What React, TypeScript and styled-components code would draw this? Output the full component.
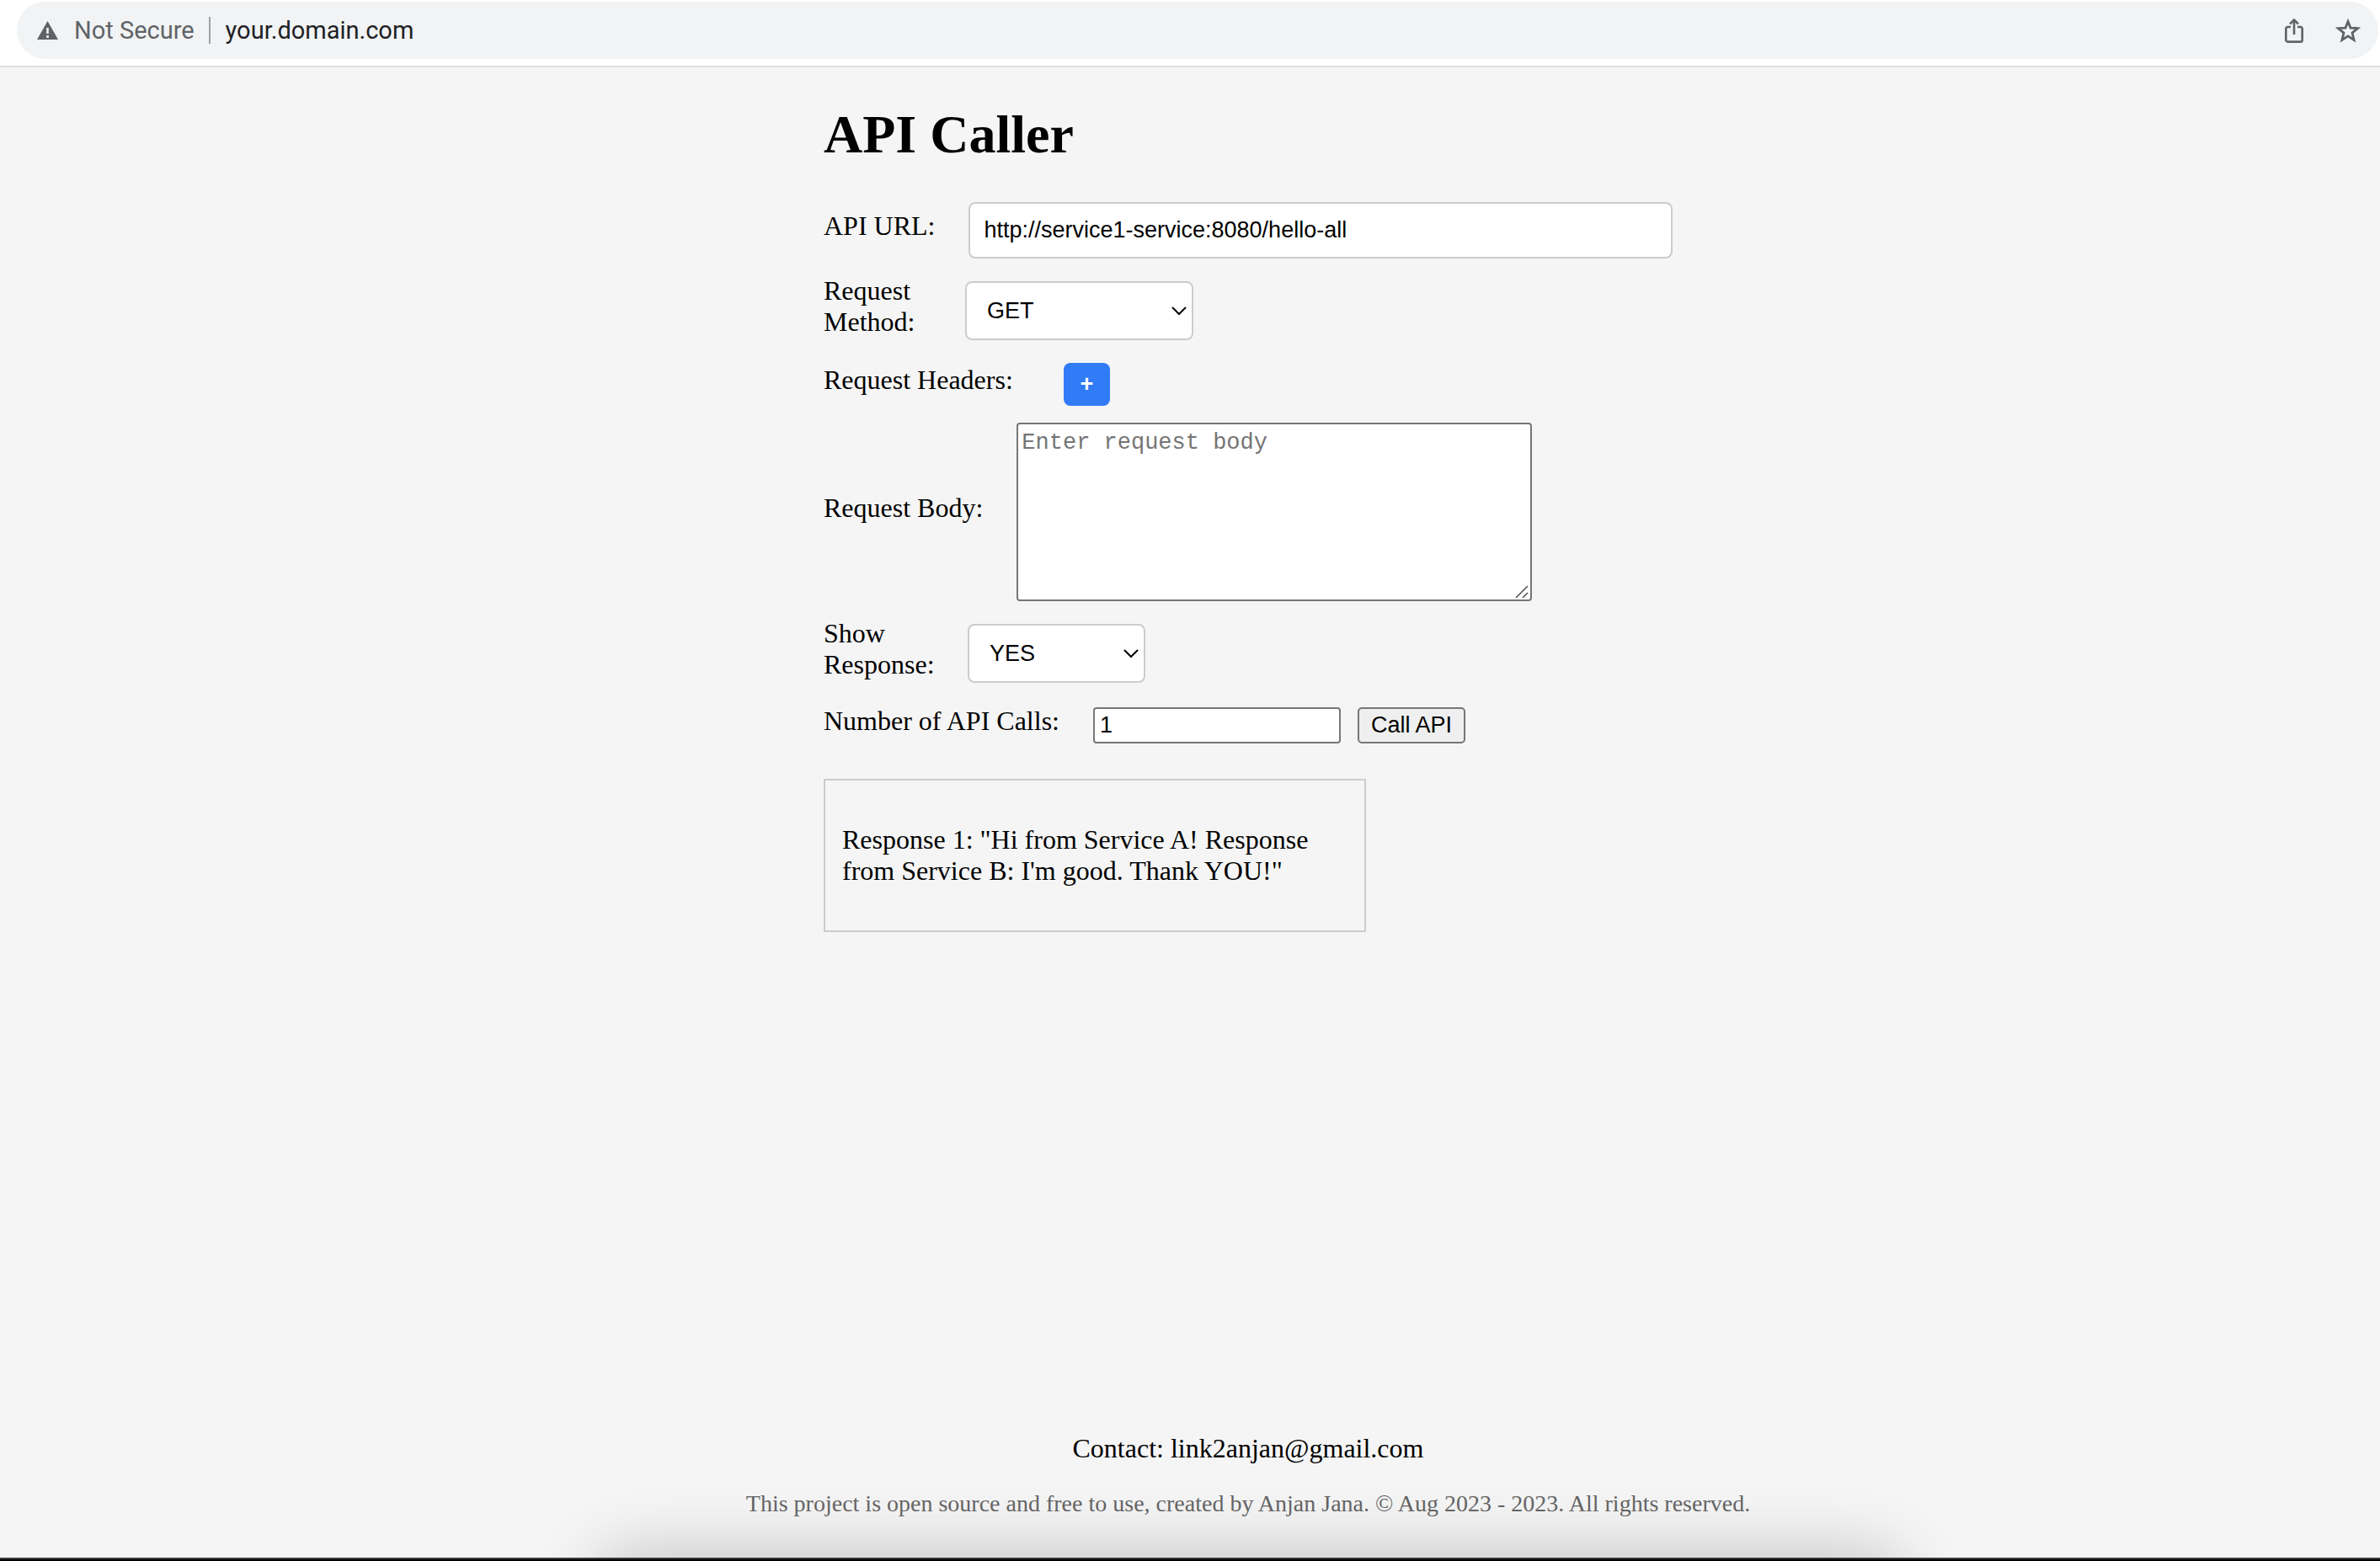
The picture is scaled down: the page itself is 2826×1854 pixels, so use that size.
import React, { useState } from "react";
import styled, { createGlobalStyle } from "styled-components";

const serif = `"Liberation Serif", "Times New Roman", Times, serif`;
const sans = `"Liberation Sans", Arial, Helvetica, sans-serif`;
const mono = `"Liberation Mono", "Courier New", monospace`;

const GlobalStyle = createGlobalStyle`
  *, *::before, *::after { box-sizing: border-box; }
  body {
    margin: 0;
    background: #f5f5f5;
    color: #000;
    font: 32px/37px ${serif};
  }
`;

const Screen = styled.div`
  min-height: 100vh;
  display: flex;
  flex-direction: column;
`;

/* Browser bar */

const BrowserBar = styled.header`
  padding: 2px 2px 8px 20px;
  background: #fff;
  border-bottom: 2px solid #dcdcdc;
`;

const AddressPill = styled.div`
  height: 68px;
  padding: 0 20px 0 24px;
  display: flex;
  align-items: center;
  background: #f1f3f4;
  border-radius: 34px;
  font: 29px/34px Roboto, sans-serif;
`;

const SecurityButton = styled.button`
  display: flex;
  align-items: center;
  gap: 19px;
  padding: 0;
  border: 0;
  background: none;
  color: #5f6368;
  font: inherit;
`;

const Divider = styled.span`
  width: 2px;
  height: 32px;
  margin: 0 18px 0 17px;
  background: #9fa1a4;
`;

const AddressInput = styled.input`
  flex: 1;
  min-width: 0;
  padding: 0;
  border: 0;
  background: none;
  color: #202124;
  font: inherit;
`;

const BarActions = styled.div`
  display: flex;
  align-items: center;
  gap: 32px;
`;

const IconButton = styled.button`
  display: flex;
  padding: 0;
  border: 0;
  background: none;
  color: #5f6368;
`;

/* Page */

const Page = styled.div`
  flex: 1;
  display: flex;
  flex-direction: column;
  align-items: center;
  padding: 43px 0 48px 138px;
`;

const Main = styled.main`
  width: 100%;
  max-width: 1008px;
  flex: 1;
`;

const Title = styled.h1`
  margin: 0 0 43px;
  font-size: 64px;
  line-height: 74px;
`;

const Form = styled.form`
  display: flex;
  flex-direction: column;
  gap: 20px;
`;

const Row = styled.div`
  display: flex;
  align-items: center;
`;

const Label = styled.label<{ $width?: number; $gap?: number }>`
  flex: none;
  width: ${(p) => (p.$width ? `${p.$width}px` : "auto")};
  margin-right: ${(p) => p.$gap ?? 40}px;
  margin-bottom: 10px;
`;

const UrlInput = styled.input`
  flex: 1;
  min-width: 0;
  height: 67px;
  padding: 0 16px;
  background: #fff;
  border: 2px solid #ccc;
  border-radius: 8px;
  color: #000;
  font: 27px/31px ${sans};
`;

const Stack = styled.div`
  display: grid;

  > * {
    grid-area: 1 / 1;
  }
`;

const Select = styled.select<{ $width: number }>`
  appearance: none;
  width: ${(p) => p.$width}px;
  height: 70px;
  padding: 0 24px;
  background: #fff;
  border: 2px solid #ccc;
  border-radius: 8px;
  color: #000;
  font: 27px/31px ${sans};
`;

const Chevron = styled.svg`
  place-self: center end;
  margin-right: 7px;
  pointer-events: none;
`;

const AddButton = styled.button`
  width: 55px;
  height: 51px;
  padding: 0;
  background: #317bf7;
  border: 0;
  border-radius: 8px;
  color: #fff;
  font: bold 27px/31px ${sans};
`;

const BodyInput = styled.textarea`
  width: 612px;
  height: 212px;
  padding: 7px 4px;
  resize: none;
  background: #fff;
  border: 2px solid #767676;
  border-radius: 4px;
  font: 27px/31px ${mono};

  &::placeholder {
    color: #757575;
  }
`;

const Grip = styled.svg`
  place-self: end;
  margin: 0 3px 3px 0;
  pointer-events: none;
`;

const CountInput = styled.input`
  width: 294px;
  height: 43px;
  padding: 2px 6px;
  background: #fff;
  border: 2px solid #767676;
  border-radius: 4px;
  color: #000;
  font: 27px/31px ${sans};
`;

const CallButton = styled.button`
  height: 43px;
  margin-left: 20px;
  padding: 0 14px;
  background: #efefef;
  border: 2px solid #767676;
  border-radius: 5px;
  color: #000;
  font: 27px/31px ${sans};
`;

const ResponseBox = styled.section`
  max-width: 644px;
  margin-top: 40px;
  padding: 52px 20px;
  border: 2px solid #ccc;
`;

const Paragraph = styled.p`
  margin: 0;
`;

const Footer = styled.footer`
  display: flex;
  flex-direction: column;
  align-items: center;
  gap: 31px;
`;

const MailLink = styled.a`
  color: inherit;
  text-decoration: none;
`;

const Copyright = styled.p`
  margin: 0;
  color: #666;
  font-size: 28px;
  line-height: 32px;
`;

/* Window edge, with the soft shadow that the dock casts on the page */

const WindowEdge = styled.div`
  position: relative;
  height: 4px;
  background: #000;
  border-top: 2px solid #3c3c3c;
`;

const DockShadow = styled.div`
  position: absolute;
  right: 0;
  bottom: 100%;
  left: 0;
  height: 120px;
  overflow: hidden;
  pointer-events: none;

  &::before {
    content: "";
    position: absolute;
    top: 100%;
    left: 25%;
    right: 20%;
    height: 120px;
    border-radius: 40px;
    box-shadow: 0 -8px 80px rgba(0, 0, 0, 0.2);
  }
`;

export default function App() {
  const [address, setAddress] = useState("your.domain.com");
  const [url, setUrl] = useState("http://service1-service:8080/hello-all");
  const [method, setMethod] = useState("GET");
  const [body, setBody] = useState("");
  const [show, setShow] = useState("YES");
  const [count, setCount] = useState("1");

  const chevron = (
    <Chevron width="20" height="14" viewBox="0 0 20 14" aria-hidden="true">
      <path d="M2.5 3.5l7.5 7.5 7.5-7.5" fill="none" stroke="#000" strokeWidth="2" strokeLinecap="round" />
    </Chevron>
  );

  return (
    <Screen>
      <GlobalStyle />
      <BrowserBar>
        <AddressPill>
          <SecurityButton type="button">
            <svg width="25" height="22" viewBox="0 0 25 22" aria-hidden="true">
              <path fill="currentColor" fillRule="evenodd" d="M12.5 0L25 22H0zM11.2 8v7h2.6V8zm0 9v3h2.6v-3z" />
            </svg>
            Not Secure
          </SecurityButton>
          <Divider />
          <AddressInput aria-label="Address" value={address} onChange={(e) => setAddress(e.target.value)} />
          <BarActions>
            <IconButton type="button" aria-label="Share">
              <svg width="32" height="32" viewBox="0 0 32 32" fill="none" stroke="currentColor" strokeWidth="2.6" aria-hidden="true">
                <path d="M12 12H8.500a2.200 2.200 0 0 0-2.200 2.200v13.200A2.200 2.200 0 0 0 8.500 29.600h15a2.200 2.200 0 0 0 2.200-2.200V14.200a2.200 2.200 0 0 0-2.200-2.200H20" />
                <path d="M16 21V4M11 8.500l5-5 5 5" />
              </svg>
            </IconButton>
            <IconButton type="button" aria-label="Bookmark">
              <svg width="32" height="32" viewBox="0 0 32 32" fill="none" stroke="currentColor" strokeWidth="2.8" aria-hidden="true">
                <path d="M16 5.500l3 7.600 8.600.5-6.600 5.500 2.100 8.300L16 22.900l-7.100 4.500L11 19.100l-6.600-5.500 8.600-.5z" />
              </svg>
            </IconButton>
          </BarActions>
        </AddressPill>
      </BrowserBar>

      <Page>
        <Main>
          <Title>API Caller</Title>
          <Form onSubmit={(e) => e.preventDefault()}>
            <Row>
              <Label htmlFor="url">API URL:</Label>
              <UrlInput id="url" value={url} onChange={(e) => setUrl(e.target.value)} />
            </Row>
            <Row>
              <Label htmlFor="method" $width={128}>Request Method:</Label>
              <Stack>
                <Select id="method" $width={271} value={method} onChange={(e) => setMethod(e.target.value)}>
                  <option>GET</option>
                  <option>POST</option>
                  <option>PUT</option>
                  <option>DELETE</option>
                </Select>
                {chevron}
              </Stack>
            </Row>
            <Row>
              <Label htmlFor="add-header" $gap={60}>Request Headers:</Label>
              <AddButton id="add-header" type="button">+</AddButton>
            </Row>
            <Row>
              <Label htmlFor="body">Request Body:</Label>
              <Stack>
                <BodyInput
                  id="body"
                  placeholder="Enter request body"
                  value={body}
                  onChange={(e) => setBody(e.target.value)}
                />
                <Grip width="17" height="16" viewBox="0 0 17 16" stroke="#555" strokeWidth="1.6" aria-hidden="true">
                  <path d="M1 15L15 1M9 15l6-6" />
                </Grip>
              </Stack>
            </Row>
            <Row>
              <Label htmlFor="show" $width={131}>Show Response:</Label>
              <Stack>
                <Select id="show" $width={211} value={show} onChange={(e) => setShow(e.target.value)}>
                  <option>YES</option>
                  <option>NO</option>
                </Select>
                {chevron}
              </Stack>
            </Row>
            <Row>
              <Label htmlFor="count">Number of API Calls:</Label>
              <CountInput id="count" type="number" min="1" value={count} onChange={(e) => setCount(e.target.value)} />
              <CallButton type="submit">Call API</CallButton>
            </Row>
          </Form>
          <ResponseBox>
            <Paragraph>Response 1: "Hi from Service A! Response from Service B: I'm good. Thank YOU!"</Paragraph>
          </ResponseBox>
        </Main>
        <Footer>
          <Paragraph>
            Contact: <MailLink href="mailto:link2anjan@gmail.com">link2anjan@gmail.com</MailLink>
          </Paragraph>
          <Copyright>
            This project is open source and free to use, created by Anjan Jana. © Aug 2023 - 2023. All rights reserved.
          </Copyright>
        </Footer>
      </Page>
      <WindowEdge>
        <DockShadow />
      </WindowEdge>
    </Screen>
  );
}
